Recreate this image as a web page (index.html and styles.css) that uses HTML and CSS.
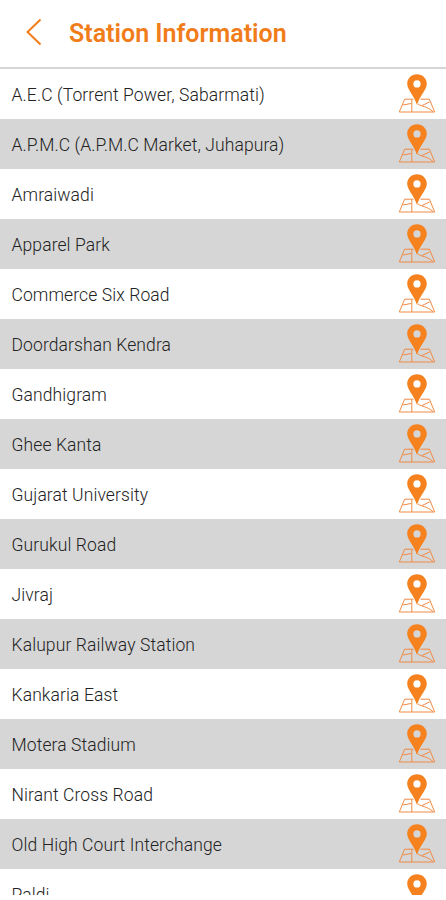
FILE: index.html
```
<!DOCTYPE html>
<html lang="en">
<head>
<meta charset="utf-8">
<meta name="viewport" content="width=device-width, initial-scale=1">
<title>Station Information</title>
<link rel="stylesheet" href="styles.css">
</head>
<body>

<!-- map pin icon, used by every row -->
<svg class="sprite" width="0" height="0">
  <symbol id="pin" viewBox="0 0 38 40">
    <path class="map" d="M15.500 25.2H6.6L1.3 38H36.7L31.4 25.2H22.500M13.8 25.2V38M20 30C24 33 29 32 35 37.6M24 31.500L31.500 28M5 31L13 29.5"/>
    <path class="marker" fill-rule="evenodd" d="M19 .3C13.500 .3 9.200 4.500 9.200 9.800C9.200 16 16 21 19 31C22 21 28.800 16 28.800 9.800C28.800 4.500 24.500 .3 19 .3ZM19 6.300A3.600 3.600 0 1 1 19 13.500A3.600 3.600 0 1 1 19 6.300Z"/>
  </symbol>
</svg>

<div class="screen">

<header>
  <a href="#" class="back">
    <svg width="16" height="28" viewBox="0 0 16 28"><path d="M14.500 1.500L1.500 14L14.500 26.500"/></svg>
  </a>
  <h1>Station Information</h1>
</header>

<ul class="stations">
  <li><span>A.E.C (Torrent Power, Sabarmati)</span><svg><use href="#pin"/></svg></li>
  <li><span>A.P.M.C (A.P.M.C Market, Juhapura)</span><svg><use href="#pin"/></svg></li>
  <li><span>Amraiwadi</span><svg><use href="#pin"/></svg></li>
  <li><span>Apparel Park</span><svg><use href="#pin"/></svg></li>
  <li><span>Commerce Six Road</span><svg><use href="#pin"/></svg></li>
  <li><span>Doordarshan Kendra</span><svg><use href="#pin"/></svg></li>
  <li><span>Gandhigram</span><svg><use href="#pin"/></svg></li>
  <li><span>Ghee Kanta</span><svg><use href="#pin"/></svg></li>
  <li><span>Gujarat University</span><svg><use href="#pin"/></svg></li>
  <li><span>Gurukul Road</span><svg><use href="#pin"/></svg></li>
  <li><span>Jivraj</span><svg><use href="#pin"/></svg></li>
  <li><span>Kalupur Railway Station</span><svg><use href="#pin"/></svg></li>
  <li><span>Kankaria East</span><svg><use href="#pin"/></svg></li>
  <li><span>Motera Stadium</span><svg><use href="#pin"/></svg></li>
  <li><span>Nirant Cross Road</span><svg><use href="#pin"/></svg></li>
  <li><span>Old High Court Interchange</span><svg><use href="#pin"/></svg></li>
  <li><span>Paldi</span><svg><use href="#pin"/></svg></li>
</ul>

</div>

</body>
</html>
```
FILE: styles.css
```
* {
    box-sizing: border-box;
}

body {
    margin: 0;
    background: #fff;
    font-family: Roboto, "Liberation Sans", sans-serif;
}

.sprite {
    display: block;
}

.screen {
    height: 895px;
    overflow: hidden;
}

header {
    display: flex;
    align-items: center;
    height: 69px;
    padding: 0 0 3px 26px;
    border-bottom: 2px solid #d6d6d6;
}

header h1 {
    margin: 0 0 0 27px;
    padding-top: 2px;
    font-size: 25px;
    font-weight: 600;
    color: #f07d1a;
}

.back svg {
    display: block;
    fill: none;
    stroke: #f07d1a;
    stroke-width: 2;
}

.stations {
    list-style-type: none;
    margin: 0;
    padding: 0;
}

.stations li {
    display: flex;
    align-items: center;
    justify-content: space-between;
    height: 50px;
    padding: 0 10px 0 11.5px;
    font-size: 17.5px;
    font-weight: 350;
    letter-spacing: 0.1px;
    color: #222;
}

.stations li:first-child {
    height: 49.5px;
}

.stations li:nth-child(even) {
    background: #d6d6d6;
}

.stations li span {
    padding-top: 2px;
}

.stations li svg {
    width: 38px;
    height: 40px;
}

.marker {
    fill: #f5821f;
}

.map {
    fill: none;
    stroke: #f08a45;
    stroke-width: 1;
}
```
